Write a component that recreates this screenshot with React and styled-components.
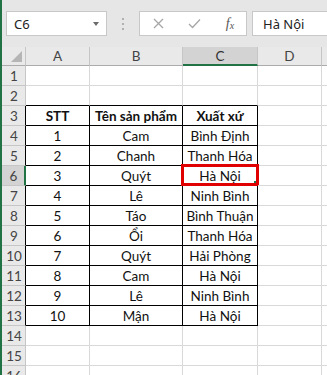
import React from "react";
import styled, { createGlobalStyle } from "styled-components";

const GlobalStyle = createGlobalStyle`
  html, body {
    margin: 0;
    padding: 0;
    height: 375px;
    overflow: hidden;
    background: #ffffff;
  }
  * {
    box-sizing: border-box;
  }
`;

const GREEN = "#217346";
const GRID = "#d9d9d9";
const HEAD_BG = "#e9e9e9";
const SEL_BG = "#d3d3d3";

// E is only partly in view, its letter lies past the window edge
const COLS = ["A", "B", "C", "D", ""];
const WIDTHS = [24, 64, 93, 75, 64, 80];

const rows = {
  3: ["STT", "Tên sản phẩm", "Xuất xứ"],
  4: ["1", "Cam", "Bình Định"],
  5: ["2", "Chanh", "Thanh Hóa"],
  6: ["3", "Quýt", "Hà Nội"],
  7: ["4", "Lê", "Ninh Bình"],
  8: ["5", "Táo", "Bình Thuận"],
  9: ["6", "Ổi", "Thanh Hóa"],
  10: ["7", "Quýt", "Hải Phòng"],
  11: ["8", "Cam", "Hà Nội"],
  12: ["9", "Lê", "Ninh Bình"],
  13: ["10", "Mận", "Hà Nội"],
};

export default function App() {
  const rowNums = Array.from({ length: 16 }, (_, i) => i + 1);

  return (
    <Window>
      <GlobalStyle />
      <EdgeStripe />
      <Main>
        <Toolbar>
          <NameBox>
            <span>C6</span>
            <DropArrow />
          </NameBox>
          <Grip>
            <i />
            <i />
            <i />
          </Grip>
          <FxButtons>
            <FxButton>
              <svg width="11" height="11" viewBox="0 0 11 11">
                <path d="M1 1 L10 10 M10 1 L1 10" stroke="#a6a6a6" strokeWidth="1.3" fill="none" />
              </svg>
            </FxButton>
            <FxButton>
              <svg width="13" height="11" viewBox="0 0 13 11">
                <path d="M1 6 L4.5 9.5 L12 1.5" stroke="#a6a6a6" strokeWidth="1.3" fill="none" />
              </svg>
            </FxButton>
            <FxButton>
              <FxLabel>
                f<sub>x</sub>
              </FxLabel>
            </FxButton>
          </FxButtons>
          <FormulaInput>Hà Nội</FormulaInput>
        </Toolbar>

        <Sheet $cols={WIDTHS}>
          <Corner>
            <svg width="11" height="11" viewBox="0 0 11 11">
              <path d="M11 0 L11 11 L0 11 Z" fill="#b5b5b5" />
            </svg>
          </Corner>
          {COLS.map((c, i) => (
            <ColHead key={i} $selected={c === "C"}>
              {c}
            </ColHead>
          ))}

          {rowNums.map((r) => {
            const inTable = r >= 3 && r <= 13;
            const data = rows[r] || [];
            return (
              <React.Fragment key={r}>
                <RowHead $selected={r === 6} $edge={inTable ? "#000" : "#c6c6c6"}>
                  {r}
                </RowHead>
                {COLS.map((c, ci) => {
                  const tableCol = ci <= 2;
                  const right = inTable && tableCol ? "#000" : GRID;
                  const bottom = r >= 2 && r <= 13 && tableCol ? "#000" : GRID;
                  return (
                    <Cell
                      key={ci}
                      $right={right}
                      $bottom={bottom}
                      $bold={r === 3}
                    >
                      {tableCol ? data[ci] : ""}
                      {r === 6 && c === "C" && (
                        <Selection>
                          <FillHandle />
                        </Selection>
                      )}
                    </Cell>
                  );
                })}
              </React.Fragment>
            );
          })}
        </Sheet>
      </Main>
    </Window>
  );
}

const Window = styled.div`
  width: 327px;
  height: 375px;
  display: flex;
  overflow: hidden;
  background: #ffffff;
`;

const EdgeStripe = styled.div`
  width: 2px;
  flex: none;
  background: ${GREEN};
`;

const Main = styled.div`
  flex: 1;
  min-width: 0;
  display: flex;
  flex-direction: column;
  overflow: hidden;
`;

const Toolbar = styled.div`
  height: 47px;
  flex: none;
  background: #e6e6e6;
  display: flex;
  align-items: flex-start;
  padding: 11px 0 0 4px;
  font-family: "Noto Sans", "Open Sans", sans-serif;
  font-size: 13px;
  color: #222;
`;

const NameBox = styled.div`
  width: 101px;
  height: 25px;
  flex: none;
  background: #fff;
  border: 1px solid #c8c8c8;
  display: flex;
  align-items: center;
  justify-content: space-between;
  padding: 0 7px 0 7px;
`;

const DropArrow = styled.div`
  width: 0;
  height: 0;
  border-left: 3.5px solid transparent;
  border-right: 3.5px solid transparent;
  border-top: 4px solid #6a6a6a;
`;

const Grip = styled.div`
  width: 32px;
  height: 25px;
  flex: none;
  display: flex;
  flex-direction: column;
  align-items: center;
  justify-content: center;
  gap: 3px;

  i {
    display: block;
    width: 2px;
    height: 2px;
    background: #b0b0b0;
  }
`;

const FxButtons = styled.div`
  width: 108px;
  height: 25px;
  flex: none;
  background: #fff;
  border: 1px solid #c8c8c8;
  display: grid;
  grid-template-columns: 36px 36px 36px;
  align-items: center;
  justify-items: center;
`;

const FxButton = styled.div`
  display: flex;
  align-items: center;
  justify-content: center;
  width: 100%;
  height: 100%;
`;

const FxLabel = styled.span`
  font-family: "Liberation Serif", "DejaVu Serif", serif;
  font-style: italic;
  font-size: 14px;
  color: #555;
  sub {
    font-size: 10px;
    vertical-align: -1px;
  }
`;

const FormulaInput = styled.div`
  margin-left: 5px;
  flex: 1;
  height: 25px;
  background: #fff;
  border: 1px solid #c8c8c8;
  border-right: none;
  display: flex;
  align-items: center;
  padding-left: 10px;
  white-space: nowrap;
`;

const Sheet = styled.div`
  display: grid;
  grid-template-columns: ${(p) => p.$cols.map((w) => `${w}px`).join(" ")};
  grid-template-rows: 19px;
  grid-auto-rows: 20px;
  font-family: "Lato", "Open Sans", sans-serif;
  font-size: 13.5px;
  color: #111;
`;

const Corner = styled.div`
  background: ${HEAD_BG};
  border-right: 1px solid #c6c6c6;
  border-bottom: 1px solid #ababab;
  display: flex;
  align-items: flex-end;
  justify-content: flex-end;
  padding: 0 3px 3px 0;
`;

const ColHead = styled.div`
  background: ${(p) => (p.$selected ? SEL_BG : HEAD_BG)};
  border-right: 1px solid #c6c6c6;
  border-bottom: ${(p) => (p.$selected ? `2px solid ${GREEN}` : "1px solid #ababab")};
  display: flex;
  align-items: center;
  justify-content: center;
  color: ${(p) => (p.$selected ? "#333" : "#444")};
  padding-top: ${(p) => (p.$selected ? "1px" : "0")};
`;

const RowHead = styled.div`
  background: ${(p) => (p.$selected ? SEL_BG : HEAD_BG)};
  border-right: ${(p) => (p.$selected ? `2px solid ${GREEN}` : `1px solid ${p.$edge}`)};
  border-bottom: 1px solid #c6c6c6;
  display: flex;
  align-items: center;
  justify-content: center;
  color: #444;
  padding-left: 1px;
`;

const Cell = styled.div`
  position: relative;
  border-right: 1px solid ${(p) => p.$right};
  border-bottom: 1px solid ${(p) => p.$bottom};
  display: flex;
  align-items: center;
  justify-content: center;
  white-space: nowrap;
  font-weight: ${(p) => (p.$bold ? 700 : 400)};
  padding-top: 1px;
`;

const Selection = styled.div`
  position: absolute;
  top: -2px;
  left: -2px;
  right: -2px;
  bottom: -1px;
  border: 3px solid #e00000;
  pointer-events: none;
`;

const FillHandle = styled.div`
  position: absolute;
  right: 0;
  bottom: 0;
  width: 2px;
  height: 2px;
  background: ${GREEN};
`;
